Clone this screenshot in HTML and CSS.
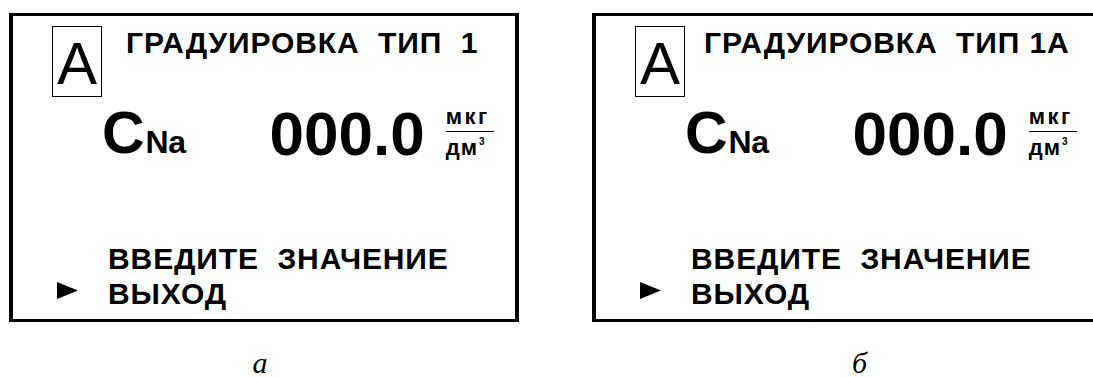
FILE: index.html
```html
<!DOCTYPE html>
<html lang="ru">
<head>
<meta charset="utf-8">
<title>Градуировка</title>
<link rel="stylesheet" href="styles.css">
</head>
<body>
<div class="figures">
  <figure class="fig fig-a">
    <div class="panel">
      <div class="header">
        <div class="mode">A</div>
        <div class="title">ГРАДУИРОВКА  ТИП  1</div>
      </div>
      <div class="reading">
        <div class="label">C<span class="sub">Na</span></div>
        <div class="value">000.0</div>
        <div class="unit">
          <span class="unit-top">мкг</span>
          <span class="unit-bottom">дм<sup class="cube">3</sup></span>
        </div>
      </div>
      <div class="menu">
        <span class="marker-cell"></span>
        <span class="item">ВВЕДИТЕ  ЗНАЧЕНИЕ</span>
        <span class="marker-cell"><svg class="marker" viewBox="0 0 21 17"><path d="M0 0 L21 8.5 L0 17 Z" fill="#000"/></svg></span>
        <span class="item">ВЫХОД</span>
      </div>
    </div>
    <figcaption class="caption">а</figcaption>
  </figure>
  <figure class="fig fig-b">
    <div class="panel">
      <div class="header">
        <div class="mode">A</div>
        <div class="title">ГРАДУИРОВКА  ТИП 1А</div>
      </div>
      <div class="reading">
        <div class="label">C<span class="sub">Na</span></div>
        <div class="value">000.0</div>
        <div class="unit">
          <span class="unit-top">мкг</span>
          <span class="unit-bottom">дм<sup class="cube">3</sup></span>
        </div>
      </div>
      <div class="menu">
        <span class="marker-cell"></span>
        <span class="item">ВВЕДИТЕ  ЗНАЧЕНИЕ</span>
        <span class="marker-cell"><svg class="marker" viewBox="0 0 21 17"><path d="M0 0 L21 8.5 L0 17 Z" fill="#000"/></svg></span>
        <span class="item">ВЫХОД</span>
      </div>
    </div>
    <figcaption class="caption">б</figcaption>
  </figure>
</div>
</body>
</html>
```

FILE: styles.css
```css
html, body {
  margin: 0;
  padding: 0;
  background: #fff;
}
body {
  width: 1093px;
  height: 377px;
  overflow: hidden;
  font-family: "Liberation Sans", Arial, sans-serif;
  color: #000;
}
.figures {
  display: flex;
  gap: 73px;
  padding: 13px 0 0 9px;
}
.fig {
  margin: 0;
  flex: 0 0 auto;
  display: flex;
  flex-direction: column;
}
.panel {
  box-sizing: border-box;
  width: 510px;
  height: 309px;
  border-style: solid;
  border-color: #000;
  border-width: 3px 4px;
  padding: 10px 0 0 39px;
  display: flex;
  flex-direction: column;
}
.header {
  display: flex;
  align-items: flex-start;
}
.mode {
  box-sizing: border-box;
  width: 50px;
  height: 71px;
  border: 1.5px solid #000;
  padding-top: 7px;
  font-size: 60px;
  line-height: 1;
  font-weight: 400;
  text-align: center;
}
.title {
  margin: 2px 0 0 24px;
  font-size: 30px;
  line-height: 1;
  font-weight: 700;
  letter-spacing: 0.9px;
  white-space: pre;
}
.fig-b .title {
  margin-left: 19px;
}
.reading {
  display: flex;
  align-items: flex-start;
  margin: 7px 0 0 50px;
}
.label {
  font-size: 59px;
  line-height: 1;
  font-weight: 700;
  letter-spacing: -1px;
}
.sub {
  font-size: 32px;
  line-height: 1;
  letter-spacing: -0.5px;
  margin-left: 2px;
}
.value {
  margin: -1px 0 0 84px;
  font-size: 62px;
  line-height: 1;
  font-weight: 700;
}
.unit {
  margin: 2px 0 0 21px;
  width: 48px;
  display: flex;
  flex-direction: column;
  font-size: 22px;
  font-weight: 700;
  line-height: 21px;
}
.unit-top {
  padding-bottom: 4px;
  border-bottom: 1.5px solid #000;
  letter-spacing: 2.5px;
}
.unit-bottom {
  padding-top: 5px;
  letter-spacing: 1px;
}
.cube {
  font-size: 10px;
  line-height: 0;
  vertical-align: 10px;
  margin-left: 1px;
}
.menu {
  margin: 76px 0 0 5px;
  display: grid;
  grid-template-columns: 21px auto;
  column-gap: 30px;
  align-items: center;
  font-size: 30px;
  line-height: 35px;
  font-weight: 700;
  letter-spacing: 0.9px;
  white-space: pre;
}
.marker-cell {
  display: flex;
  align-items: center;
}
.marker {
  display: block;
  flex: 0 0 auto;
  width: 21px;
  height: 17px;
  margin-bottom: 6px;
}
.caption {
  margin: 26px 0 0;
  padding-right: 8px;
  font-family: "Liberation Serif", "Times New Roman", serif;
  font-style: italic;
  font-size: 30px;
  line-height: 1;
  text-align: center;
}
.fig-b .caption {
  padding: 0 0 0 25px;
}
```
